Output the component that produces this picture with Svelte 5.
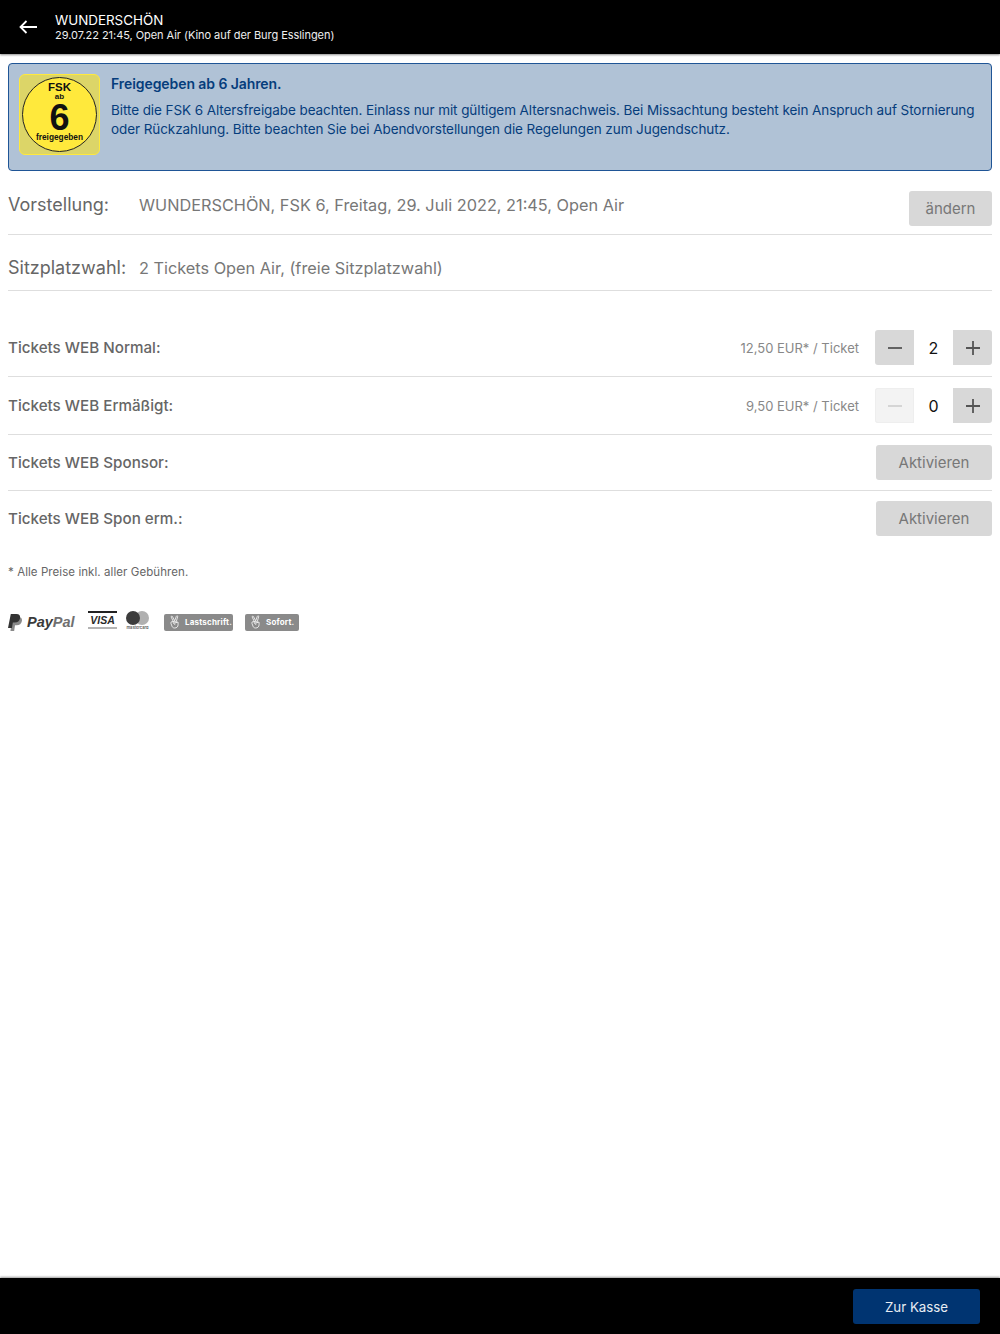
<script lang="ts">
	const seats = [
		{ label: 'Tickets WEB Normal:', price: '12,50 EUR* / Ticket', count: 2 },
		{ label: 'Tickets WEB Ermäßigt:', price: '9,50 EUR* / Ticket', count: 0 }
	];
	const sponsors = ['Tickets WEB Sponsor:', 'Tickets WEB Spon erm.:'];
</script>

{#snippet hand()}
	<svg class="hand" viewBox="0 0 14 16" width="12" height="14" fill="none" stroke="#fff" stroke-width="0.9" stroke-linejoin="round" stroke-linecap="round">
		<path d="M5 7.4 2.6 2.3c-.4-1 1-1.6 1.5-.6L6.6 6.6 8.6 1.3c.4-1 1.8-.5 1.5.5L8.6 7.2" />
		<path d="M3.4 8c-1-.3-1.6.6-1.2 1.4l1.4 3.8c.5 1.2 1.5 1.8 3 1.8 2.3 0 4-1.5 4-3.8V8.6c0-1-1.4-1-1.5 0" />
		<path d="M3.6 7.6h4c1 0 1 1.5 0 1.5H5.4M9.6 8.6c0-.9-1.3-.9-1.5-.2M5.4 9.1c0 1 .6 1.6 1.5 1.9" />
	</svg>
{/snippet}

<div class="page">
	<header class="topbar">
		<svg class="back" viewBox="0 0 18 14" width="18" height="14" fill="none" stroke="#fff" stroke-width="1.8">
			<path d="M18 7H1.5M7.5 1 1.5 7l6 6" />
		</svg>
		<div class="title">
			<div class="film">WUNDERSCHÖN</div>
			<div class="when">29.07.22 21:45, Open Air (Kino auf der Burg Esslingen)</div>
		</div>
	</header>

	<main class="content">
		<section class="notice">
			<div class="fsk">
				<div class="disc">
					<span class="fsk-top">FSK</span>
					<span class="fsk-ab">ab</span>
					<span class="fsk-age">6</span>
					<span class="fsk-free">freigegeben</span>
				</div>
			</div>
			<div class="notice-text">
				<h4>Freigegeben ab 6 Jahren.</h4>
				<p>Bitte die FSK 6 Altersfreigabe beachten. Einlass nur mit gültigem Altersnachweis. Bei Missachtung besteht kein Anspruch auf Stornierung oder Rückzahlung. Bitte beachten Sie bei Abendvorstellungen die Regelungen zum Jugendschutz.</p>
			</div>
		</section>

		<div class="info first">
			<span class="info-label">Vorstellung:</span>
			<span class="info-value">WUNDERSCHÖN, FSK 6, Freitag, 29. Juli 2022, 21:45, Open Air</span>
			<button class="grey change">ändern</button>
		</div>
		<div class="info second">
			<span class="info-label">Sitzplatzwahl:</span>
			<span class="info-value">2 Tickets Open Air, (freie Sitzplatzwahl)</span>
		</div>

		<div class="tickets">
			{#each seats as seat}
				<div class="ticket stepper-row">
					<span class="ticket-label">{seat.label}</span>
					<span class="price">{seat.price}</span>
					<div class="stepper">
						<button class="step minus" class:off={seat.count === 0} aria-label="weniger">
							<svg viewBox="0 0 14 14" width="14" height="14"><path d="M0 7h14" /></svg>
						</button>
						<span class="count">{seat.count}</span>
						<button class="step plus" aria-label="mehr">
							<svg viewBox="0 0 14 14" width="14" height="14"><path d="M0 7h14M7 0v14" /></svg>
						</button>
					</div>
				</div>
			{/each}
			{#each sponsors as label}
				<div class="ticket sponsor-row">
					<span class="ticket-label">{label}</span>
					<button class="grey activate">Aktivieren</button>
				</div>
			{/each}
		</div>

		<p class="footnote">* Alle Preise inkl. aller Gebühren.</p>

		<div class="payments">
			<div class="paypal">
				<svg class="pp-mark" viewBox="0 0 15 18" width="14" height="17" aria-hidden="true">
					<path fill="#8a8a8a" d="M5 3h6c3 0 4.4 1.7 3.9 4.4-.5 3-2.6 4.6-5.6 4.6H7.5L6.6 18H2.6z" />
					<path fill="#333" d="M3 0h6c3 0 4.4 1.7 3.9 4.4-.5 3-2.6 4.6-5.6 4.6H5.2L4.2 15H0z" />
				</svg>
				<span class="pp-name">Pay<em>Pal</em></span>
			</div>
			<div class="visa"><span>VISA</span></div>
			<div class="mc">
				<div class="mc-circles"><span class="mc-a"></span><span class="mc-b"></span></div>
				<span class="mc-name">mastercard</span>
			</div>
			<div class="badge lastschrift">{@render hand()}<span>Lastschrift.</span></div>
			<div class="badge sofort">{@render hand()}<span>Sofort.</span></div>
		</div>
	</main>

	<footer class="bottombar">
		<button class="checkout">Zur Kasse</button>
	</footer>
</div>

<style>
	:global(body) {
		background: #fff;
	}
	.page {
		min-height: 1334px;
		display: flex;
		flex-direction: column;
		font-family: Inter, 'Liberation Sans', sans-serif;
		color: #666;
	}
	button {
		font-family: inherit;
		border: none;
		padding: 0;
	}

	/* top bar */
	.topbar {
		height: 54px;
		background: #000;
		color: #fff;
		display: flex;
		align-items: center;
		box-shadow: 0 1px 2px rgba(0, 0, 0, 0.45);
	}
	.back {
		margin-left: 19px;
		flex-shrink: 0;
	}
	.title {
		margin-left: 18px;
		padding-top: 1px;
	}
	.film {
		font-size: 13.4px;
		line-height: 15px;
	}
	.when {
		font-size: 11px;
		line-height: 14px;
		letter-spacing: -0.05px;
		color: #eee;
	}

	.content {
		flex: 1;
		padding: 9px 8px 0;
	}

	/* age notice */
	.notice {
		height: 108px;
		box-sizing: border-box;
		background: #b0c2d6;
		border: 1px solid #1f5596;
		border-radius: 4px;
		padding: 10px;
		display: flex;
		gap: 11px;
		color: #063d7c;
	}
	.fsk {
		width: 81px;
		height: 81px;
		box-sizing: border-box;
		background: #dcd568;
		border: 1px solid #ffe93c;
		border-radius: 6px;
		display: flex;
		align-items: center;
		justify-content: center;
		flex-shrink: 0;
	}
	.disc {
		width: 75px;
		height: 75px;
		box-sizing: border-box;
		border: 1px solid #222;
		border-radius: 50%;
		background: #ffe93c;
		display: flex;
		flex-direction: column;
		align-items: center;
		color: #111;
		font-family: 'Liberation Sans', sans-serif;
		font-weight: 700;
	}
	.fsk-top {
		font-size: 11.5px;
		line-height: 12px;
		margin-top: 3px;
	}
	.fsk-ab {
		font-size: 8px;
		line-height: 7px;
	}
	.fsk-age {
		font-size: 36px;
		line-height: 29px;
		margin-top: 3px;
	}
	.fsk-free {
		font-size: 8.3px;
		line-height: 10px;
	}
	.notice-text h4 {
		margin: 0;
		font-size: 14px;
		line-height: 19px;
		font-weight: 600;
		letter-spacing: -0.08px;
		color: #063d7c;
	}
	.notice-text p {
		margin: 8px 0 0;
		font-size: 13.5px;
		line-height: 19px;
		letter-spacing: -0.08px;
	}

	/* show and seat summary */
	.info {
		display: flex;
		align-items: center;
		border-bottom: 1px solid #dedede;
	}
	.info.first {
		height: 59px;
		padding-top: 4px;
	}
	.info.second {
		height: 45px;
		padding-top: 10px;
	}
	.info-label {
		width: 131px;
		flex-shrink: 0;
		font-size: 18px;
		color: #666;
	}
	.info-value {
		font-size: 16.3px;
		color: #777;
		flex: 1;
	}
	.grey {
		background: #d8d8d8;
		color: #777;
		border-radius: 3px;
		height: 35px;
	}
	.change {
		width: 83px;
		font-size: 15px;
		margin-top: 7px;
	}

	/* ticket rows */
	.tickets {
		margin-top: 28px;
	}
	.ticket {
		display: flex;
		align-items: center;
		justify-content: space-between;
		border-bottom: 1px solid #dedede;
	}
	.ticket:last-child {
		border-bottom: none;
	}
	.stepper-row {
		height: 57px;
	}
	.sponsor-row {
		height: 55px;
	}
	.ticket-label {
		font-size: 15.2px;
		font-weight: 500;
		color: #666;
		flex: 1;
	}
	.price {
		font-size: 13px;
		color: #888;
		margin-right: 16px;
	}
	.stepper {
		display: flex;
		align-items: center;
	}
	.step {
		width: 39px;
		height: 35px;
		background: #d8d8d8;
		display: flex;
		align-items: center;
		justify-content: center;
	}
	.step path {
		stroke: #555;
		stroke-width: 1.8;
		fill: none;
	}
	.step.minus {
		border-radius: 3px 0 0 3px;
	}
	.step.plus {
		border-radius: 0 3px 3px 0;
	}
	.step.off {
		background: #f3f3f3;
		box-shadow: inset 0 0 0 1px #eee;
	}
	.step.off path {
		stroke: #d2d2d2;
	}
	.count {
		width: 39px;
		text-align: center;
		font-size: 16px;
		color: #111;
	}
	.activate {
		width: 116px;
		font-size: 15px;
	}

	.footnote {
		margin: 18px 0 0;
		font-size: 11.5px;
		line-height: 16px;
		letter-spacing: 0.07px;
		color: #666;
	}

	/* payment logos */
	.payments {
		margin-top: 28px;
		height: 28px;
		display: flex;
		align-items: center;
	}
	.paypal {
		display: flex;
		align-items: center;
		width: 80px;
		flex-shrink: 0;
		font-family: 'Liberation Sans', sans-serif;
		font-weight: 700;
		font-style: italic;
	}
	.pp-mark {
		margin-right: 5px;
		flex-shrink: 0;
	}
	.pp-name {
		font-size: 14.5px;
		color: #3a3a3a;
	}
	.pp-name em {
		color: #707070;
	}
	.visa {
		width: 29px;
		height: 18px;
		margin-top: -4px;
		border-top: 2px solid #222;
		border-bottom: 2px solid #b4b4b4;
		box-sizing: border-box;
		display: flex;
		align-items: center;
		justify-content: center;
		flex-shrink: 0;
		font-family: 'Liberation Sans', sans-serif;
		font-size: 10.5px;
		font-weight: 700;
		font-style: italic;
		color: #2a2a2a;
	}
	.mc {
		margin-left: 9px;
		width: 38px;
		flex-shrink: 0;
		margin-top: -3px;
	}
	.mc-circles {
		display: flex;
	}
	.mc-circles span {
		width: 14px;
		height: 14px;
		border-radius: 50%;
	}
	.mc-a {
		background: #3c3c3c;
		position: relative;
		z-index: 1;
	}
	.mc-b {
		background: #b0b0b0;
		margin-left: -5px;
	}
	.mc-name {
		display: block;
		width: 23px;
		text-align: center;
		font-size: 4px;
		line-height: 5px;
		font-weight: 600;
		color: #555;
	}
	.badge {
		height: 17px;
		background: #8a8a8a;
		border-radius: 2px;
		display: flex;
		align-items: center;
		color: #fff;
		font-size: 8px;
		font-weight: 700;
		letter-spacing: 0.2px;
		box-sizing: border-box;
		padding-left: 5px;
		gap: 4px;
	}
	.lastschrift {
		width: 69px;
	}
	.sofort {
		width: 54px;
		margin-left: 12px;
	}

	/* bottom bar */
	.bottombar {
		height: 56px;
		box-sizing: border-box;
		background: #000;
		box-shadow: 0 -1px 2px rgba(0, 0, 0, 0.4);
		display: flex;
		justify-content: flex-end;
		align-items: center;
		padding-right: 20px;
	}
	.checkout {
		width: 127px;
		height: 35px;
		background: #003471;
		color: #e8edf3;
		border-radius: 3px;
		font-size: 13.3px;
		margin-top: 1px;
	}
</style>
